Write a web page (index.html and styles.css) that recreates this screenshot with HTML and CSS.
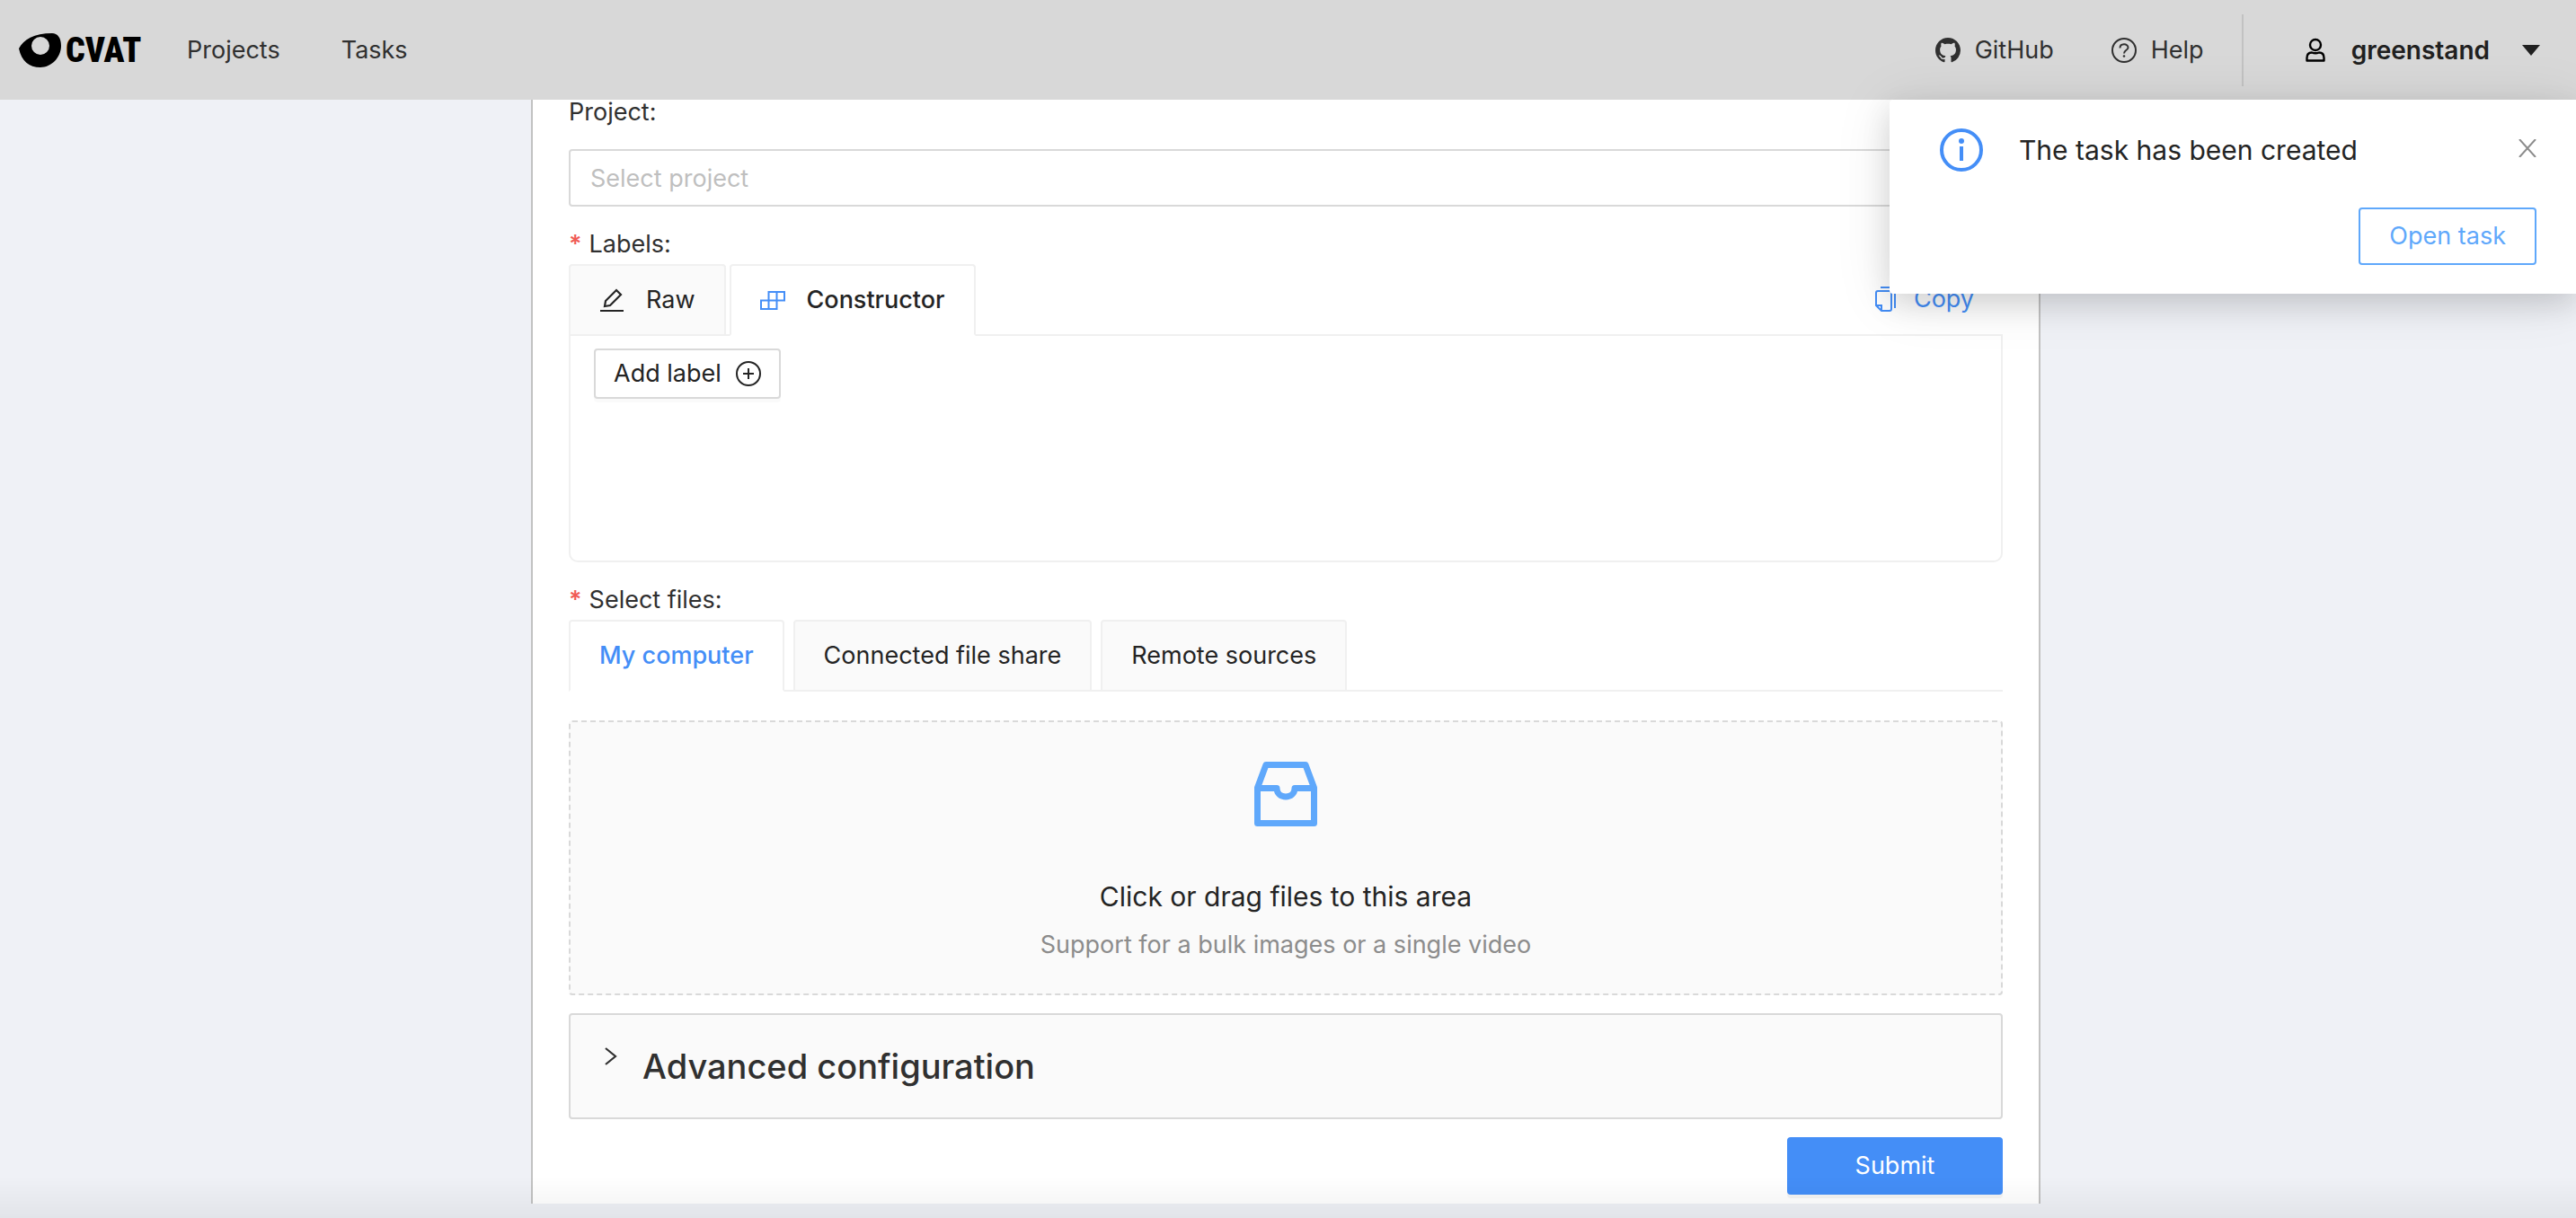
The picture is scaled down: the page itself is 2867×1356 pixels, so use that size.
FILE: index.html
```html
<!DOCTYPE html>
<html lang="en">
<head>
<meta charset="utf-8">
<title>Create a new task - CVAT</title>
<link rel="stylesheet" href="styles.css">
</head>
<body>
<header class="header">
  <a class="logo" href="#">
    <svg width="48" height="38" viewBox="0 0 48 38" aria-hidden="true"><path fill-rule="evenodd" d="M0 17C5 7 17 0 37 0C43 0 47 5 47 14C47 27 36 38 24 38C11 38 3 31 0 17ZM24 4A10 10 0 1 0 24 24A10 10 0 1 0 24 4Z"/></svg>
    <span class="wordmark">CVAT</span>
  </a>
  <nav class="nav">
    <a href="#">Projects</a>
    <a href="#">Tasks</a>
  </nav>
  <div class="header-right">
    <a class="header-link" href="#"><svg class="icon" viewBox="0 0 16 16" aria-hidden="true"><path d="M8 0C3.58 0 0 3.58 0 8c0 3.54 2.29 6.53 5.47 7.59.4.07.55-.17.55-.38 0-.19-.01-.82-.01-1.49-2.01.37-2.53-.49-2.69-.94-.09-.23-.48-.94-.82-1.13-.28-.15-.68-.52-.01-.53.63-.01 1.08.58 1.23.82.72 1.21 1.87.87 2.33.66.07-.52.28-.87.51-1.07-1.78-.2-3.64-.89-3.64-3.95 0-.87.31-1.59.82-2.15-.08-.2-.36-1.02.08-2.12 0 0 .67-.21 2.2.82.64-.18 1.32-.27 2-.27s1.36.09 2 .27c1.53-1.04 2.2-.82 2.2-.82.44 1.1.16 1.92.08 2.12.51.56.82 1.27.82 2.15 0 3.07-1.87 3.75-3.65 3.95.29.25.54.73.54 1.48 0 1.07-.01 1.93-.01 2.2 0 .21.15.46.55.38A8.01 8.01 0 0 0 16 8c0-4.42-3.58-8-8-8z"/></svg>GitHub</a>
    <a class="header-link" href="#"><svg class="icon" viewBox="0 0 28 28" aria-hidden="true" fill="none" stroke="currentColor" stroke-width="2"><circle cx="14" cy="14" r="13"/><path d="M9.500 11.500C9.500 6 18.500 6 18.500 11C18.500 14 14 13.500 14 17.500"/><circle cx="14" cy="20.500" r="1.300" fill="currentColor" stroke="none"/></svg>Help</a>
    <button class="user" type="button"><svg class="icon" viewBox="0 0 28 28" aria-hidden="true" fill="none" stroke="#000" stroke-width="2.400"><circle cx="14" cy="8" r="6"/><path d="M4.500 25.500V22.500C4.500 18.500 6 16.500 10 16.500C12.500 17.500 15.500 17.500 18 16.500C22 16.500 23.500 18.500 23.500 22.500V25.500Z" stroke-linejoin="round"/></svg><span>greenstand</span><svg class="caret" width="20" height="12" viewBox="0 0 20 12" aria-hidden="true"><path d="M0 0H20L10 12Z"/></svg></button>
  </div>
</header>

<main class="main">
  <form class="panel">
    <label class="label" for="project">Project:</label>
    <input class="project" id="project" type="text" placeholder="Select project">

    <h2 class="label"><span class="required">*</span>Labels:</h2>
    <div class="tabs tabs-labels">
      <button class="tab" type="button"><svg class="icon" viewBox="0 0 28 28" aria-hidden="true" fill="none" stroke="currentColor" stroke-width="2.200"><path d="M1 26H27M6 21L7 15L19 3L24 8L12 20Z"/></svg>Raw</button>
      <button class="tab tab-active tab-strong" type="button"><svg class="icon icon-blue" viewBox="0 0 28 28" aria-hidden="true" fill="none" stroke="currentColor" stroke-width="2"><path d="M1 14.500H18.500V24H1ZM9.500 5H27V14.500H9.500ZM9.500 14.500V24M18.500 5V14.500"/></svg>Constructor</button>
      <button class="copy" type="button"><svg class="icon" viewBox="0 0 28 28" aria-hidden="true" fill="none" stroke="currentColor" stroke-width="2"><path d="M7 1H20Q23 1 23 4V24M4 5H17Q19 5 19 7V25Q19 27 17 27H8L2 21V7Q2 5 4 5ZM2 21H8V27"/></svg>Copy</button>
    </div>
    <div class="constructor">
      <button class="add-label" type="button">Add label<svg class="icon" viewBox="0 0 28 28" aria-hidden="true" fill="none" stroke="currentColor" stroke-width="2"><circle cx="14" cy="14" r="13"/><path d="M14 8V20M8 14H20"/></svg></button>
    </div>

    <h2 class="label"><span class="required">*</span>Select files:</h2>
    <div class="tabs tabs-files">
      <button class="tab tab-active tab-blue" type="button">My computer</button>
      <button class="tab" type="button">Connected file share</button>
      <button class="tab" type="button">Remote sources</button>
    </div>
    <button class="dropzone" type="button">
      <svg width="70" height="72" viewBox="0 0 70 72" aria-hidden="true" fill="none" stroke="#5fa8fb" stroke-width="7" stroke-linejoin="round"><path d="M3.500 29L13 3.500H57L66.500 29V68.500H3.500ZM3.500 29.500H25C25 42 45 42 45 29.500H66.500"/></svg>
      <span class="drop-title">Click or drag files to this area</span>
      <span class="drop-hint">Support for a bulk images or a single video</span>
    </button>

    <button class="advanced" type="button"><svg width="14" height="20" viewBox="0 0 14 20" aria-hidden="true" fill="none" stroke="currentColor" stroke-width="2.200"><path d="M1 1L12 10L1 19"/></svg>Advanced configuration</button>
    <button class="submit" type="submit">Submit</button>
  </form>
</main>
<div class="bottom-shade"></div>

<aside class="notice" role="status">
  <svg class="notice-icon" width="48" height="48" viewBox="0 0 48 48" aria-hidden="true" fill="none" stroke="currentColor" stroke-width="4"><circle cx="24" cy="24" r="22"/><path d="M24 20V36"/><circle cx="24" cy="14" r="3" fill="currentColor" stroke="none"/></svg>
  <p class="notice-text">The task has been created</p>
  <button class="close" type="button" aria-label="Close"><svg width="20" height="20" viewBox="0 0 20 20" aria-hidden="true" fill="none" stroke="currentColor" stroke-width="2"><path d="M1 0L19 20M19 0L1 20"/></svg></button>
  <button class="open-task" type="button">Open task</button>
</aside>
</body>
</html>
```
FILE: styles.css
```css
* { box-sizing: border-box; }
body {
  margin: 0;
  min-height: 100vh;
  background: #eff1f6;
  color: #242424;
  font: 27px/44px Inter, "Liberation Sans", sans-serif;
  overflow: hidden;
}
button { font: inherit; color: inherit; cursor: pointer; margin: 0; }
a { color: inherit; text-decoration: none; }
svg { display: block; flex: none; }
.icon { width: 28px; height: 28px; }
.icon-blue { color: #448ef7; }

.header {
  display: flex;
  align-items: center;
  height: 111px;
  padding: 0 40px 0 21px;
  background: #d8d8d8;
  color: #303030;
}
.logo { display: flex; align-items: center; gap: 4px; width: 137px; color: #000; }
.wordmark {
  font-family: "Roboto Condensed", "Liberation Sans Narrow", Roboto, sans-serif;
  font-size: 38px;
  font-weight: 900;
}
.nav { display: flex; gap: 68px; margin-left: 50px; }
.header-right { display: flex; align-items: center; margin-left: auto; }
.header-link { display: flex; align-items: center; gap: 16px; margin-right: 64px; }
.header-link + .header-link { margin-right: 42px; }
.header .icon { fill: currentColor; }
.header .icon[fill="none"] { fill: none; }
.user {
  display: flex;
  align-items: center;
  height: 80px;
  padding: 0 0 0 66px;
  border: 0;
  border-left: 2px solid #c2c2c2;
  background: none;
  color: #202020;
  font-size: 28px;
  font-weight: 600;
}
.user span { margin: 0 36px 0 26px; }
.caret { fill: #202020; }

.main { padding-right: 5px; }
.panel {
  display: flex;
  flex-direction: column;
  width: 1680px;
  max-width: 100%;
  margin: 0 auto;
  padding: 0 40px 10px;
  border: solid #c2c2c2;
  border-width: 0 2px;
  background: #fff;
}
.label { margin: 0; font: inherit; line-height: 44px; color: #303030; }
.label[for] { line-height: 27px; }
.required { margin-right: 8px; color: #f05b56; font-weight: 600; line-height: 1; }
.project {
  height: 64px;
  margin: 28px 0 20px;
  padding: 0 22px;
  border: 2px solid #d9d9d9;
  border-radius: 4px;
  background: #fff;
  font: inherit;
}
.project::placeholder { color: #bfbfbf; opacity: 1; }

.tabs { display: flex; border-bottom: 2px solid #f0f0f0; }
.tabs-labels { gap: 4px; }
.tabs-files { gap: 10px; }
.tab {
  display: flex;
  align-items: center;
  gap: 24px;
  height: 80px;
  margin-bottom: -2px;
  padding: 0 32px;
  border: 2px solid #f0f0f0;
  border-radius: 4px 4px 0 0;
  background: #fafafa;
}
.tab-active { background: #fff; border-bottom-color: #fff; }
.tab-strong { font-weight: 500; }
.tab-blue { color: #448ef7; font-weight: 500; }
.copy {
  display: flex;
  align-items: center;
  gap: 16px;
  margin-left: auto;
  padding: 0 32px;
  border: 0;
  background: none;
  color: #448ef7;
}
.constructor {
  height: 252px;
  margin-bottom: 20px;
  padding: 14px 26px;
  border: 2px solid #f0f0f0;
  border-top: 0;
  border-radius: 0 0 10px 10px;
}
.add-label {
  display: flex;
  align-items: center;
  gap: 16px;
  height: 56px;
  padding: 0 20px;
  border: 2px solid #d9d9d9;
  border-radius: 4px;
  background: #fff;
  box-shadow: 0 4px 0 rgba(0, 0, 0, .02);
}
.dropzone {
  display: flex;
  flex-direction: column;
  align-items: center;
  height: 306px;
  margin: 32px 0 20px;
  padding: 44px 0 0;
  border: 2px dashed #d9d9d9;
  border-radius: 4px;
  background: #fafafa;
}
.drop-title { margin: 56px 0 10px; font-size: 30px; }
.drop-hint { color: #8c8c8c; }
.advanced {
  display: flex;
  align-items: center;
  gap: 28px;
  height: 118px;
  padding: 0 38px;
  border: 2px solid #d9d9d9;
  border-radius: 4px;
  background: #fafafa;
  color: #303030;
  font-size: 38px;
  font-weight: 500;
}
.advanced svg { margin-bottom: 22px; }
.submit {
  align-self: flex-end;
  width: 240px;
  height: 64px;
  margin-top: 20px;
  border: 0;
  border-radius: 4px;
  background: #448ef7;
  color: #fff;
  box-shadow: 0 4px 0 rgba(0, 0, 0, .045);
}
.bottom-shade {
  position: fixed;
  inset: auto 0 0;
  height: 46px;
  background: linear-gradient(rgba(0, 0, 0, 0), rgba(0, 0, 0, .05));
  pointer-events: none;
}

.notice {
  position: absolute;
  top: 111px;
  right: 0;
  display: grid;
  grid-template-columns: 48px 1fr auto;
  column-gap: 40px;
  align-items: center;
  width: 764px;
  padding: 32px 44px 32px 56px;
  border-radius: 4px 0 0 4px;
  background: #fff;
  box-shadow: 0 12px 32px rgba(0, 0, 0, .12), 0 6px 64px rgba(0, 0, 0, .1);
}
.notice-icon { color: #448ef7; }
.notice-text { margin: 0; font-size: 30px; line-height: 48px; }
.close { padding: 0 0 4px; border: 0; background: none; color: #8c8c8c; }
.open-task {
  grid-column: 1 / -1;
  justify-self: end;
  height: 64px;
  margin-top: 40px;
  padding: 0 32px;
  border: 2px solid #5fa8fb;
  border-radius: 4px;
  background: #fff;
  color: #5fa8fb;
}
```
